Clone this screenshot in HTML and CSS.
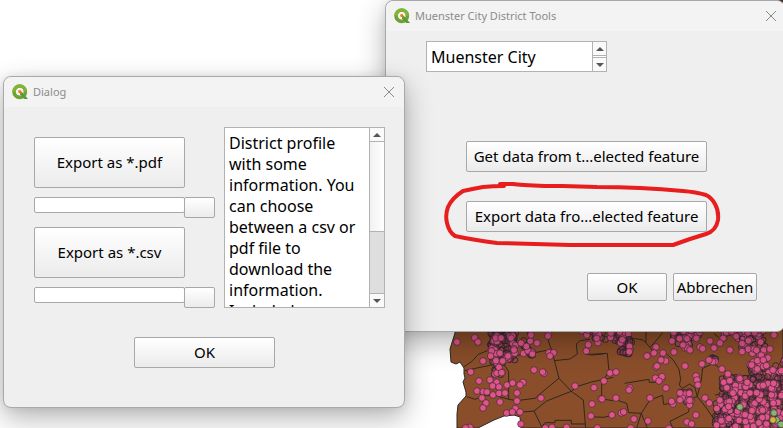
FILE: index.html
```html
<!DOCTYPE html>
<html lang="en">
<head>
<meta charset="utf-8">
<title>Muenster City District Tools</title>
<link rel="stylesheet" href="styles.css">
</head>
<body>
<svg class="map" viewBox="0 0 783 428" preserveAspectRatio="xMinYMin slice" aria-hidden="true">
  <g class="land">
    <path d="M480 0H783V2H480Z"/>
    <path d="M456 326L455 333L450 349L451 362L456 364L460 362L464 368L464 374L465 378L463 382L466 392L466 396L458 405L457 414L457 428H478L484 425L494 420L504 416L514 415L520 417L521 428H783V326Z"/>
  </g>
  <g class="borders" transform="translate(400 320) scale(.3333)">
    <path d="M192 140L215 125L235 103L262 92M195 152L240 142L275 135L300 118L360 105L395 100L435 92L455 88M200 230L225 238L250 228L280 225L326 238V155L310 130M326 238L350 242L405 235L440 205L477 175L514 214L550 240L557 324M455 33L445 62L455 92L463 120L477 175M463 122L510 117L532 102L529 72L540 62L570 58M514 214L530 200L575 186L640 172M514 214L440 243L402 273L350 278M402 273L425 320L435 308H465V301H514V312H557M360 105L390 60L380 33M557 102L575 105L610 102"/>
    <path d="M738 33V68M788 38L765 66L750 82M570 103L622 100L627 153L605 190V237L640 242M700 55L730 60L750 82L764 100M640 237L680 250L686 278L724 280L750 240L788 226L791 253L820 250M674 190L747 178L748 187H766L790 168M724 280L710 324M724 280L742 324M798 100L820 120L837 148L842 178L838 195L848 205L868 192L885 203L892 230M892 230L904 180L908 145L940 130L964 148M892 230L870 236L866 276L810 304L818 324M892 230L920 265L950 310L962 324M942 41L956 52M570 290L610 292L646 285M964 148L1000 165L1080 170M945 225L975 220"/>
  </g>
  <g id="dots" transform="translate(400 320) scale(.3333)"></g>
  <g class="topdots"><path d="M490 .5h11M520 .5h7M541 .5h30M605 .5h6M657 .5h12M678 .5h6M710 .5h20M762 .5h6"/></g>
</svg>

<main class="desktop">
  <section class="window tools" aria-labelledby="tools-title">
    <header class="titlebar">
      <svg class="logo" viewBox="0 0 16 16" aria-hidden="true"><circle cx="7.7" cy="7.7" r="5.7" fill="none" stroke="#6ba42e" stroke-width="3.6"/><path d="M2 7.7A5.7 5.7 0 0 1 13.4 7.7" fill="none" stroke="#83b436" stroke-width="3"/><path d="M8 8L10 8L16 15H12.300L8 10.500Z" fill="#5a9a3c"/><path d="M6.300 6.300H9L10 9L8.500 9.500L6.300 8.500Z" fill="#ee7913"/></svg>
      <h1 class="title" id="tools-title">Muenster City District Tools</h1>
      <button class="close" aria-label="Close"><svg viewBox="0 0 12 12"><path d="M1 1L11 11M11 1L1 11"/></svg></button>
    </header>
    <div class="tools-body">
      <div class="stepper">
        <input type="text" value="Muenster City" aria-label="District">
        <div class="steps">
          <button aria-label="Previous"><svg viewBox="0 0 8 4"><path d="M0 4L4 0L8 4Z"/></svg></button>
          <button aria-label="Next"><svg viewBox="0 0 8 4"><path d="M0 0L4 4L8 0Z"/></svg></button>
        </div>
      </div>
      <div class="actions">
        <button class="btn">Get data from t...elected feature</button>
        <button class="btn">Export data fro...elected feature</button>
      </div>
      <footer class="answers">
        <button class="btn">OK</button>
        <button class="btn">Abbrechen</button>
      </footer>
    </div>
    <svg class="marker" viewBox="442 180 280 70" aria-hidden="true"><path d="M504 186Q493 186 483 187Q472 189 463 191Q452 198 448 207Q445 215 447 223Q449 232 455 236Q474 240 497 243Q530 244 570 245L673 245L690 239L706 234Q716 231 718 220Q719 211 715 204Q712 198 706 195Q696 192 683 191Q640 187 597 187L562 186L545 186Q520 185 513 184L500 184"/></svg>
  </section>

  <section class="window dialog" aria-labelledby="dialog-title">
    <header class="titlebar">
      <svg class="logo" viewBox="0 0 16 16" aria-hidden="true"><circle cx="7.7" cy="7.7" r="5.7" fill="none" stroke="#6ba42e" stroke-width="3.6"/><path d="M2 7.7A5.7 5.7 0 0 1 13.4 7.7" fill="none" stroke="#83b436" stroke-width="3"/><path d="M8 8L10 8L16 15H12.300L8 10.500Z" fill="#5a9a3c"/><path d="M6.300 6.300H9L10 9L8.500 9.500L6.300 8.500Z" fill="#ee7913"/></svg>
      <h2 class="title" id="dialog-title">Dialog</h2>
      <button class="close" aria-label="Close"><svg viewBox="0 0 12 12"><path d="M1 1L11 11M11 1L1 11"/></svg></button>
    </header>
    <div class="dialog-body">
      <div class="columns">
        <div class="exports">
          <button class="btn big">Export as *.pdf</button>
          <div class="file"><input type="text" aria-label="PDF file"><button class="btn" aria-label="Browse for PDF file"></button></div>
          <button class="btn big">Export as *.csv</button>
          <div class="file"><input type="text" aria-label="CSV file"><button class="btn" aria-label="Browse for CSV file"></button></div>
        </div>
        <div class="info">
          <textarea readonly aria-label="Description">District profile with some information. You can choose between a csv or pdf file to download the information. Included</textarea>
          <div class="scrollbar">
            <button aria-label="Scroll up"><svg viewBox="0 0 8 4"><path d="M0 4L4 0L8 4Z"/></svg></button>
            <div class="groove"><div class="thumb"></div></div>
            <button aria-label="Scroll down"><svg viewBox="0 0 8 4"><path d="M0 0L4 4L8 0Z"/></svg></button>
          </div>
        </div>
      </div>
      <button class="btn confirm">OK</button>
    </div>
  </section>
</main>
<script src="map.js"></script>
</body>
</html>
```
FILE: styles.css
```css
* { box-sizing: border-box; }

body {
  margin: 0;
  min-height: 100vh;
  overflow: hidden;
  background: #fff;
  color: #000;
  font: 16px/21px "Noto Sans", "Open Sans", sans-serif;
}

button, input, textarea {
  margin: 0;
  padding: 0;
  border: 0;
  border-radius: 0;
  font: inherit;
  color: inherit;
}

.map { position: absolute; top: 0; left: 0; width: 100%; }
.land { fill: #8a4e2a; stroke: #2c2724; stroke-width: 1; }
.borders { fill: none; stroke: #30281f; stroke-width: 3; stroke-linejoin: round; }
.dot { fill: #df548a; stroke: #3b2930; stroke-width: 2; }
.ring { fill: #b8486f; fill-opacity: .3; stroke: #33242b; stroke-width: 3; }
.green { fill: #85b66f; }
.yellow { fill: #d5b43c; }
.topdots { fill: none; stroke: #b5476f; stroke-width: 1; }

.window {
  position: absolute;
  background: #efefef;
  border: 1px solid #a9a9a9;
  border-radius: 8px;
  box-shadow: 0 10px 28px rgba(0, 0, 0, .3), 0 0 8px rgba(0, 0, 0, .08);
}
.tools { top: 0; left: 385px; right: -2px; }
.dialog { top: 76px; left: 3px; width: 402px; }

.titlebar {
  display: flex;
  align-items: center;
  height: 30px;
  padding: 0 9px 0 8px;
  background: #f3f3f3;
  border-radius: 8px 8px 0 0;
}
.tools .titlebar { padding-right: 7px; }
.logo { width: 16px; height: 16px; }
.title {
  flex: 1;
  margin: 0 0 0 5px;
  color: #8b8b8b;
  font: 400 11px/16px "Noto Sans", sans-serif;
}
.close { display: flex; background: none; }
.close svg { width: 12px; height: 12px; fill: none; stroke: #8a8a8a; stroke-width: 1; }

.btn {
  border: 1px solid #a8a8a8;
  border-radius: 2px;
  background: linear-gradient(#fff, #ebebeb);
  font-size: 15px;
  white-space: nowrap;
}

.tools-body { padding: 10px 27px 30px 40px; }
.stepper {
  display: flex;
  width: 181px;
  height: 31px;
  border: 1px solid #b2b2b2;
  background: #fff;
}
.stepper input { flex: 1; min-width: 0; padding: 2px 0 0 4px; }
.steps {
  display: flex;
  flex-direction: column;
  gap: 1px;
  width: 14px;
  border-left: 1px solid #b2b2b2;
}
.steps button, .scrollbar button {
  display: flex;
  align-items: center;
  justify-content: center;
  background: #fafafa;
}
.steps button { flex: 1; }
.steps button:first-child { border-bottom: 1px solid #b2b2b2; }
.steps button:last-child { border-top: 1px solid #b2b2b2; }
.steps svg, .scrollbar svg { width: 8px; height: 4px; fill: #555; }

.actions {
  display: flex;
  flex-direction: column;
  gap: 29px;
  width: 241px;
  margin: 69px 0 0 40px;
}
.actions .btn { height: 31px; }
.answers { display: flex; justify-content: flex-end; gap: 6px; margin-top: 41px; }
.answers .btn { width: 80px; height: 28px; }
.answers .btn:last-child { width: 84px; }

.marker {
  position: absolute;
  top: 179px;
  left: 56px;
  width: 280px;
  height: 70px;
  fill: none;
  stroke: #e81d1d;
  stroke-width: 4;
  stroke-linejoin: round;
  stroke-linecap: round;
  pointer-events: none;
}

.dialog-body { padding: 20px 19px 39px 30px; }
.columns { display: flex; justify-content: space-between; }
.exports { display: flex; flex-direction: column; justify-content: flex-end; gap: 9px; }
.big { width: 151px; height: 51px; }
.file { display: flex; align-items: flex-start; height: 21px; }
.file input {
  width: 151px;
  height: 16px;
  border: 1px solid #a8a8a8;
  border-radius: 2px;
  background: #fff;
}
.file .btn { width: 31px; height: 21px; margin-left: -1px; }

.info {
  display: flex;
  width: 161px;
  height: 181px;
  border: 1px solid #b2b2b2;
  background: #fff;
}
.info textarea {
  flex: 1;
  min-width: 0;
  padding: 5px 0 0 4px;
  resize: none;
  overflow: hidden;
  background: #fff;
}
.scrollbar {
  display: flex;
  flex-direction: column;
  width: 15px;
  border-left: 1px solid #b2b2b2;
}
.scrollbar button { height: 13px; }
.scrollbar button:last-child { height: 14px; border-top: 1px solid #b2b2b2; }
.groove { flex: 1; background: #dedede; }
.thumb {
  height: 60%;
  border: 1px solid #b2b2b2;
  border-width: 1px 0;
  background: linear-gradient(90deg, #f1f1f1, #fff);
}
.confirm { display: block; width: 141px; height: 31px; margin: 29px 0 0 100px; }
```
FILE: map.js
```js
const layer = document.getElementById("dots");
let seed = 7;
const random = () => (seed = (seed * 16807) % 2147483647) / 2147483647;

function dot(x, y, kind = "dot", r = 10) {
  const c = document.createElementNS("http://www.w3.org/2000/svg", "circle");
  c.setAttribute("cx", x);
  c.setAttribute("cy", y);
  c.setAttribute("r", r);
  c.setAttribute("class", kind);
  layer.append(c);
}

// Dense groups of addresses: x, y, width, height, dark rings, bright dots
const clusters = [
  [272, 28, 75, 50, 70, 8], [270, 85, 75, 35, 24, 14], [278, 125, 30, 40, 10, 5],
  [355, 58, 45, 48, 10, 8], [545, 30, 50, 16, 6, 5], [580, 30, 110, 40, 20, 18],
  [660, 58, 35, 45, 35, 5], [812, 28, 90, 30, 26, 12], [820, 55, 60, 30, 4, 6],
  [968, 30, 100, 30, 14, 17], [1020, 55, 40, 45, 8, 8], [1060, 30, 35, 90, 8, 12],
  [935, 110, 14, 16, 12, 2], [1050, 120, 110, 60, 30, 24], [965, 170, 190, 155, 300, 115],
  [765, 165, 22, 20, 4, 4], [838, 215, 35, 35, 6, 7], [945, 240, 50, 80, 24, 14]
];
for (const [x, y, w, h, rings, bright] of clusters) {
  for (let i = 0; i < rings; i++) dot(x + random() * w, y + random() * h, "ring", 9);
  for (let i = 0; i < bright; i++) dot(x + random() * w, y + random() * h);
}

const single = [
  [171,66],[224,53],[234,66],[249,123],[212,156],[237,183],[231,213],[250,215],[261,216],[246,234],[258,249],
  [249,264],[270,180],[290,187],[278,198],[297,201],[279,225],[297,220],[315,219],[321,195],[338,189],[369,187],
  [360,195],[351,219],[351,243],[300,246],[346,266],[360,276],[320,279],[337,276],[363,312],[402,150],[432,160],
  [428,156],[423,234],[393,45],[411,69],[446,42],[444,48],[447,98],[461,98],[450,108],[397,102],[525,198],
  [582,203],[576,252],[573,288],[559,93],[565,74],[603,237],[210,322],[197,324],[436,324],[456,322],[500,322],
  [592,324],[272,108],[288,122],[308,123],[297,142],[324,108],[342,90],[363,69],[305,158],[287,54],[303,54],[333,54],
  [630,159],[648,156],[612,183],[690,204],[687,210],[606,237],[648,234],[636,285],
  [664,279],[671,276],[702,297],[744,303],[750,234],[798,204],[768,81],[741,108],[762,99],[789,99],
  [797,123],[783,120],[768,141],[771,138],[855,138],[822,96],[816,63],[849,75],[870,90],[900,81],[908,86],[930,63],
  [942,84],[960,69],[990,90],[906,132],[927,120],[966,147],[984,162],[888,168],[891,180],[894,195],[777,183],
  [840,219],[819,252],[815,244],[840,240],[869,255],[869,241],[888,285],[861,306],[875,312],[915,234],[928,249],
  [692,324],[807,325],[1110,87],[1122,45],[1082,66],[1104,114],[1090,120],[1055,135],[1072,147],[1119,150]
];
single.forEach(([x, y]) => dot(x, y));
dot(1020, 261, "dot green");
dot(1130, 300, "dot green");
dot(1122, 279, "dot green");
dot(1143, 313, "dot green");
dot(1119, 300, "dot yellow");
```
